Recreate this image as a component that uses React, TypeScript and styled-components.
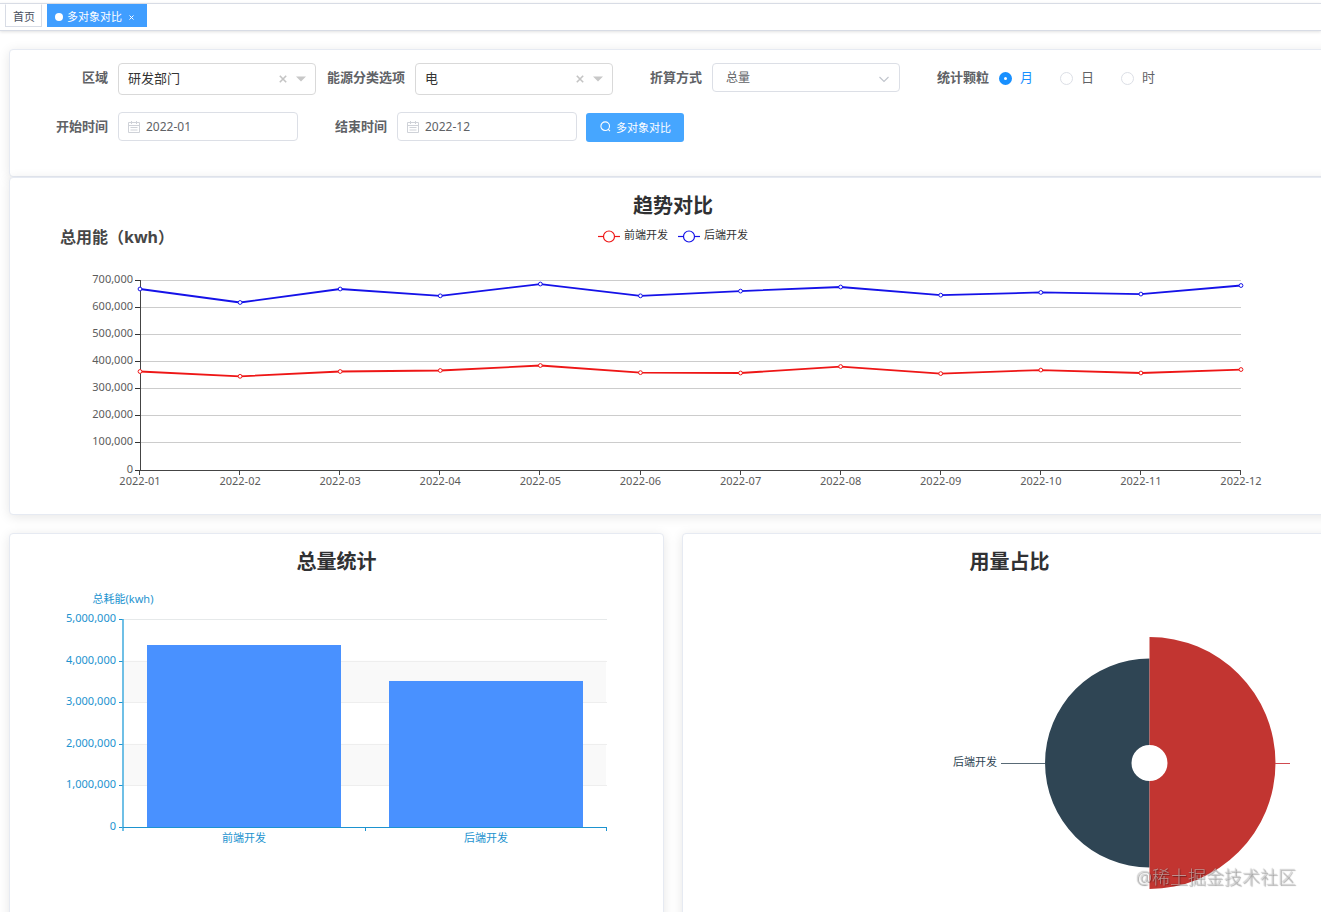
import React, { useState } from 'react';
import styled, { createGlobalStyle, css } from 'styled-components';

const fontStack = '"Noto Sans", "Noto Sans CJK SC", sans-serif';

const GlobalStyle = createGlobalStyle`
  * { box-sizing: border-box; }
  body {
    margin: 0;
    background: #fff;
    color: #606266;
    font-family: ${fontStack};
    font-size: 13px;
  }
  button, input, select { font-family: inherit; margin: 0; }
`;

const Page = styled.div`
  height: 100vh;
  overflow-x: hidden;
  overflow-y: auto;
  scrollbar-width: none;
`;

const TabsBar = styled.nav`
  display: flex;
  gap: 5px;
  height: 28px;
  margin-top: 3px;
  padding-left: 5px;
  border-top: 1px solid #d8dce5;
  border-bottom: 1px solid #d8dce5;
  box-shadow: 0 1px 3px rgba(0, 0, 0, 0.12);
`;

const Tab = styled.a<{ $active?: boolean }>`
  display: flex;
  align-items: center;
  height: 23px;
  padding: 2px 6px 0 7px;
  border: 1px solid #d8dce5;
  border-top-color: transparent;
  color: #495060;
  background: #fff;
  font-size: 11px;
  line-height: 16px;
  text-decoration: none;
  ${(p) =>
    p.$active &&
    css`
      border-color: #409eff;
      background: #409eff;
      color: #fff;
    `}
`;

const TabDot = styled.span`
  width: 8px;
  height: 8px;
  margin-right: 4px;
  border-radius: 50%;
  background: #fff;
`;

const TabClose = styled.svg`
  width: 5px;
  height: 5px;
  margin: 2px 6px 0 7px;
  stroke: #fff;
`;

const Content = styled.main`
  margin: 18px -16px 18px 9px;
`;

const Card = styled.section`
  border: 1px solid #e6eaf2;
  border-radius: 4px;
  background: #fff;
  box-shadow: 0 2px 12px rgba(0, 0, 0, 0.1);
  min-width: 0;
`;

const FilterCard = styled(Card).attrs({ as: 'form' })`
  padding: 13px 9px 34px;
`;

const FilterRow = styled.div`
  display: flex;
  align-items: flex-start;
  & + & { margin-top: 17px; }
`;

const FieldLabel = styled.label`
  width: 99px;
  padding-right: 10px;
  color: #606266;
  font-size: 13px;
  font-weight: 700;
  line-height: 28px;
  text-align: right;
  white-space: nowrap;
`;

const Control = styled.div<{ $width: number }>`
  position: relative;
  width: ${(p) => p.$width}px;
`;

const Select = styled.select<{ $tall?: boolean }>`
  display: block;
  width: 100%;
  height: ${(p) => (p.$tall ? 32 : 29)}px;
  padding: 0 ${(p) => (p.$tall ? 9 : 13)}px ${(p) => (p.$tall ? 2 : 0)}px;
  border: 1px solid ${(p) => (p.$tall ? '#d9d9d9' : '#dcdfe6')};
  border-radius: 4px;
  appearance: none;
  background: #fff;
  color: ${(p) => (p.$tall ? '#333' : '#606266')};
  font-size: ${(p) => (p.$tall ? 13 : 12)}px;
`;

const SelectIcons = styled.div`
  position: absolute;
  top: 0;
  right: 10px;
  height: 32px;
  display: flex;
  align-items: center;
  gap: 9px;
  pointer-events: none;
`;

const ClearButton = styled.button`
  display: flex;
  padding: 0;
  border: 0;
  background: none;
  pointer-events: auto;
`;

const DateInput = styled.input`
  display: block;
  width: 100%;
  height: 29px;
  padding: 0 10px 0 27px;
  border: 1px solid #dcdfe6;
  border-radius: 4px;
  color: #606266;
  font-size: 12px;
`;

const CalendarIcon = styled.svg`
  position: absolute;
  left: 10px;
  top: 9px;
  width: 12px;
  height: 12px;
  fill: none;
  stroke: #cfd2d8;
`;

const SubmitButton = styled.button`
  display: flex;
  align-items: center;
  gap: 5px;
  height: 29px;
  margin: 1px 0 0 9px;
  padding: 0 13px 2px 14px;
  border: 0;
  border-radius: 3px;
  background: #46a6ff;
  color: #fff;
  font-size: 11px;
`;

const RadioGroup = styled.div`
  display: flex;
  gap: 27px;
`;

const RadioLabel = styled.label<{ $checked: boolean }>`
  display: flex;
  align-items: center;
  gap: 8px;
  height: 28px;
  font-size: 13px;
  line-height: 28px;
  color: ${(p) => (p.$checked ? '#1890ff' : '#606266')};
`;

const Radio = styled.input`
  appearance: none;
  width: 13px;
  height: 13px;
  margin-top: 2px;
  border: 1px solid #dcdfe6;
  border-radius: 50%;
  background: #fff;
  &:checked {
    border: 5px solid #1890ff;
  }
`;

const CardTitle = styled.h2`
  margin: 15px 0 0;
  color: #303133;
  font-size: 20px;
  line-height: 26px;
  text-align: center;
`;

const Chart = styled.svg`
  display: block;
  width: 100%;
  height: auto;
  font-family: ${fontStack};
  font-size: 11px;
`;

const ChartGrid = styled.div`
  display: grid;
  grid-template-columns: 1fr 1fr;
  gap: 18px;
  margin-top: 18px;
`;

const Watermark = styled.div`
  position: fixed;
  right: 25px;
  bottom: 22px;
  color: rgba(255, 255, 255, 0.5);
  font-size: 18px;
  font-weight: 300;
  line-height: 26px;
  text-shadow: 0 0 1px rgba(0, 0, 0, 0.4), 1px 1px 1px rgba(0, 0, 0, 0.35);
  pointer-events: none;
`;

interface FieldProps {
  id: string;
  label: string;
  value: string;
}

function TreeField({ id, label, value }: FieldProps) {
  return (
    <>
      <FieldLabel htmlFor={id}>{label}</FieldLabel>
      <Control $width={198}>
        <Select id={id} $tall defaultValue={value}>
          <option>{value}</option>
        </Select>
        <SelectIcons>
          <ClearButton type="button" aria-label="清除">
            <svg width="8" height="8" viewBox="0 0 8 8" stroke="#c4c4c4" strokeWidth="1.6">
              <path d="M.8.8l6.400 6.400M7.200.8L.8 7.200" />
            </svg>
          </ClearButton>
          <svg width="10" height="6" viewBox="0 0 10 6" fill="#c8c8c8">
            <path d="M0 .5h10L5 5.500z" />
          </svg>
        </SelectIcons>
      </Control>
    </>
  );
}

function MonthField({ id, label, value }: FieldProps) {
  return (
    <>
      <FieldLabel htmlFor={id}>{label}</FieldLabel>
      <Control $width={180}>
        <DateInput id={id} type="text" defaultValue={value} />
        <CalendarIcon viewBox="0 0 12 12">
          <path d="M.5 1.5h11v10H.5zM.5 4.5h11M3.5 0v3M8.5 0v3M2.5 6.5h7M2.5 9h7" />
        </CalendarIcon>
      </Control>
    </>
  );
}

const months = Array.from({ length: 12 }, (_, i) => `2022-${String(i + 1).padStart(2, '0')}`);

const trendSeries = [
  {
    name: '前端开发',
    color: '#ee1616',
    legendX: 588,
    values: [364700, 347000, 364700, 368400, 386800, 360500, 359200, 383000, 357000, 370000, 359200, 372000],
  },
  {
    name: '后端开发',
    color: '#1512e8',
    legendX: 668,
    values: [668700, 619000, 668700, 643500, 687000, 643500, 661000, 676000, 646000, 656000, 650000, 681500],
  },
];

function TrendChart() {
  const left = 130;
  const right = 1231;
  const top = 61;
  const bottom = 251;
  const x = (i: number) => left + (i * (right - left)) / 11;
  const y = (v: number) => bottom - (v / 700000) * (bottom - top);
  const crisp = (n: number) => Math.floor(n) + 0.5;
  return (
    <Chart viewBox="0 0 1326 295" role="img" aria-label="趋势对比">
      <text x="50" y="24" fontSize="16" fontWeight="700" fill="#464646">总用能（kwh）</text>
      {trendSeries.map((s) => (
        <g key={s.name}>
          <path d={`M${s.legendX} 17.5h22`} stroke={s.color} strokeWidth="1.2" />
          <circle cx={s.legendX + 11} cy="17.5" r="5.5" fill="#fff" stroke={s.color} strokeWidth="1.2" />
          <text x={s.legendX + 26} y="20" fill="#333">{s.name}</text>
        </g>
      ))}
      {Array.from({ length: 8 }, (_, i) => {
        const gy = crisp(y(i * 100000));
        return (
          <g key={i}>
            {i > 0 && <path d={`M${left} ${gy}H${right}`} stroke="#ccc" />}
            <path d={`M${left - 5} ${gy}h5`} stroke="#333" />
            <text x={left - 7} y={gy + 2.5} textAnchor="end" fill="#5c5c5c">
              {(i * 100000).toLocaleString('en-US')}
            </text>
          </g>
        );
      })}
      <path d={`M${left + 0.5} ${top}V${bottom + 1}M${left} ${bottom + 0.5}H${right}`} stroke="#444" />
      {months.map((m, i) => (
        <g key={m}>
          <path d={`M${crisp(x(i) - 0.4)} ${bottom}v5`} stroke="#444" />
          <text x={x(i)} y="266" textAnchor="middle" fill="#5c5c5c">{m}</text>
        </g>
      ))}
      {trendSeries.map((s) => (
        <g key={s.name} stroke={s.color} fill="none">
          <polyline
            points={s.values.map((v, i) => `${x(i)},${y(v) + 0.5}`).join(' ')}
            strokeWidth="1.8"
            strokeLinejoin="bevel"
          />
          {s.values.map((v, i) => (
            <circle key={i} cx={x(i)} cy={y(v) + 0.5} r="1.9" fill="#fff" strokeWidth="1" />
          ))}
        </g>
      ))}
    </Chart>
  );
}

const totals = [
  { name: '前端开发', value: 4375000 },
  { name: '后端开发', value: 3510000 },
];

function TotalChart() {
  const left = 113;
  const right = 597;
  const top = 44;
  const bottom = 252;
  const band = (right - left) / totals.length;
  const y = (v: number) => bottom - (v / 5000000) * (bottom - top);
  return (
    <Chart viewBox="0 0 653 380" role="img" aria-label="总量统计">
      <text x={left} y="28" textAnchor="middle" fill="#1d93cf">总耗能(kwh)</text>
      {[1, 3].map((i) => (
        <rect key={i} x={left} y={y((i + 1) * 1000000)} width={right - left - 1} height="41.6" fill="#f9f9f9" />
      ))}
      {Array.from({ length: 6 }, (_, i) => {
        const gy = Math.round(y(i * 1000000)) + 0.5;
        return (
          <g key={i}>
            {i > 0 && <path d={`M${left} ${gy}H${right}`} stroke={i === 5 ? '#e6e9ea' : '#eee'} />}
            <path d={`M${left - 4} ${gy}h4`} stroke="#1d93cf" />
            <text x={left - 7} y={gy + 2.5} textAnchor="end" fill="#1d93cf">
              {(i * 1000000).toLocaleString('en-US')}
            </text>
          </g>
        );
      })}
      {totals.map((t, i) => (
        <g key={t.name}>
          <rect x={left + i * band + 24} y={y(t.value)} width="194" height={bottom - y(t.value)} fill="#4991ff" />
          <text x={left + (i + 0.5) * band} y="267" textAnchor="middle" fill="#1d93cf">{t.name}</text>
        </g>
      ))}
      <path d={`M${left} ${top}V${bottom + 4}`} stroke="#4bb0e0" strokeWidth="1.6" />
      <path
        d={`M${left} ${bottom + 0.5}H${right}M${left + band + 0.5} ${bottom}v4M${right - 0.5} ${bottom}v4`}
        stroke="#1d93cf"
      />
    </Chart>
  );
}

function ShareChart() {
  return (
    <Chart viewBox="0 0 653 380" role="img" aria-label="用量占比">
      <path d="M466.5 83.5a104.5 104.5 0 0 0 0 209v-86.5a18 18 0 0 1 0-36z" fill="#2f4554" />
      <path d="M466.5 62a126 126 0 0 1 0 252v-108a18 18 0 0 0 0-36z" fill="#c23531" />
      <path d="M318 188.5h44" stroke="#2f4554" strokeOpacity="0.8" />
      <path d="M592 188.5h15" stroke="#d04a50" />
      <text x="314" y="191" textAnchor="end" fill="#2f4554">后端开发</text>
    </Chart>
  );
}

export default function App() {
  const [grain, setGrain] = useState('月');
  return (
    <Page>
      <GlobalStyle />
      <TabsBar>
        <Tab href="#home">首页</Tab>
        <Tab href="#compare" $active>
          <TabDot />
          多对象对比
          <TabClose viewBox="0 0 5 5"><path d="M.5.5l4 4M4.5.5l-4 4" /></TabClose>
        </Tab>
      </TabsBar>
      <Content>
        <FilterCard>
          <FilterRow>
            <TreeField id="area" label="区域" value="研发部门" />
            <TreeField id="energy" label="能源分类选项" value="电" />
            <FieldLabel htmlFor="convert">折算方式</FieldLabel>
            <Control $width={188}>
              <Select id="convert" defaultValue="总量">
                <option>总量</option>
              </Select>
              <SelectIcons>
                <svg width="12" height="7" viewBox="0 0 12 7" fill="none" stroke="#c0c4cc" strokeWidth="1.1">
                  <path d="M1.5 1L6 5.5L10.5 1" />
                </svg>
              </SelectIcons>
            </Control>
            <FieldLabel as="span" id="grain-label">统计颗粒</FieldLabel>
            <RadioGroup role="radiogroup" aria-labelledby="grain-label">
              {['月', '日', '时'].map((g) => (
                <RadioLabel key={g} $checked={grain === g}>
                  <Radio type="radio" name="grain" checked={grain === g} onChange={() => setGrain(g)} />
                  {g}
                </RadioLabel>
              ))}
            </RadioGroup>
          </FilterRow>
          <FilterRow>
            <MonthField id="start" label="开始时间" value="2022-01" />
            <MonthField id="end" label="结束时间" value="2022-12" />
            <SubmitButton type="button">
              <svg width="11" height="11" viewBox="0 0 11 11" fill="none" stroke="#fff" strokeWidth="1.1">
                <circle cx="5.2" cy="5.2" r="4.3" />
                <path d="M8 8.2l2 2" />
              </svg>
              多对象对比
            </SubmitButton>
          </FilterRow>
        </FilterCard>
        <Card>
          <CardTitle>趋势对比</CardTitle>
          <TrendChart />
        </Card>
        <ChartGrid>
          <Card>
            <CardTitle>总量统计</CardTitle>
            <TotalChart />
          </Card>
          <Card>
            <CardTitle>用量占比</CardTitle>
            <ShareChart />
          </Card>
        </ChartGrid>
      </Content>
      <Watermark>@稀土掘金技术社区</Watermark>
    </Page>
  );
}
